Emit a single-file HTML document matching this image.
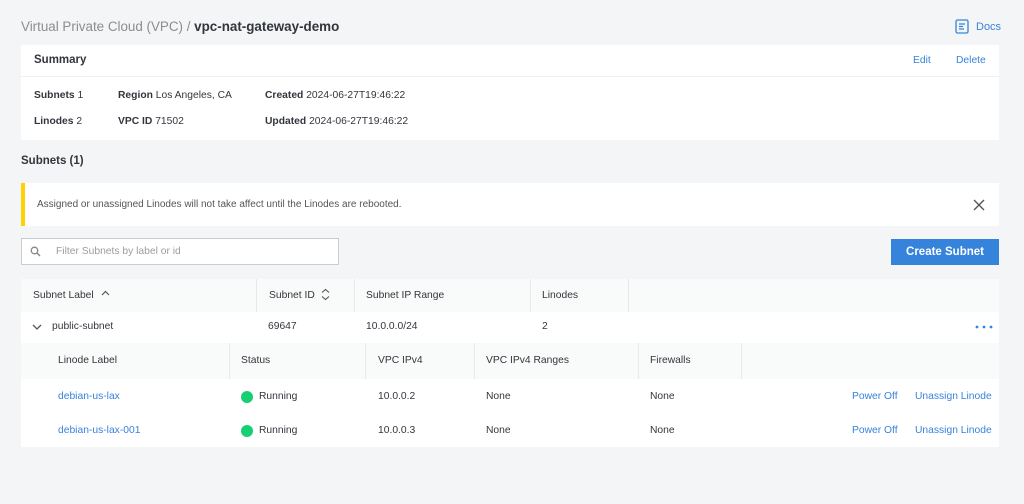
<!DOCTYPE html>
<html><head><meta charset="utf-8"><style>
*{margin:0;padding:0;box-sizing:border-box}
body{width:1024px;height:504px;background:#f4f5f6;font-family:"Liberation Sans",sans-serif;font-size:10.3px;color:#32363c;position:relative;overflow:hidden}
.a{position:absolute;white-space:nowrap}
.b{font-weight:bold}
.blue{color:#3683dc}
.g{color:#555}
.vd{position:absolute;width:1px;background:#e8e9ea}
</style></head><body>
<div class="a" style="left:21px;top:19px;font-size:13.4px;color:#8a8d91">Virtual Private Cloud (VPC) / <span class="b" style="color:#32363c">vpc-nat-gateway-demo</span></div>
<svg class="a" style="left:955px;top:19px" width="14" height="15" viewBox="0 0 14 15"><rect x="1" y="1" width="12" height="13" rx="1.5" fill="none" stroke="#3683dc" stroke-width="1.3"/><path d="M4 5h6M4 7.5h4M4 10h5" stroke="#3683dc" stroke-width="1.2"/></svg>
<div class="a blue" style="left:976px;top:21px;font-size:11px">Docs</div>

<div class="a" style="left:21px;top:45px;width:978px;height:95px;background:#fff"></div>
<div class="a" style="left:21px;top:76px;width:978px;height:1px;background:#f0f1f2"></div>
<div class="a b" style="left:34px;top:54px;font-size:11.5px">Summary</div>
<div class="a blue" style="left:913px;top:55px">Edit</div>
<div class="a blue" style="left:956px;top:55px">Delete</div>
<div class="a" style="left:34px;top:90px"><span class="b">Subnets</span> 1</div>
<div class="a" style="left:34px;top:116px"><span class="b">Linodes</span> 2</div>
<div class="a" style="left:118px;top:90px"><span class="b">Region</span> Los Angeles, CA</div>
<div class="a" style="left:118px;top:116px"><span class="b">VPC ID</span> 71502</div>
<div class="a" style="left:265px;top:90px"><span class="b">Created</span> 2024-06-27T19:46:22</div>
<div class="a" style="left:265px;top:116px"><span class="b">Updated</span> 2024-06-27T19:46:22</div>

<div class="a b" style="left:21px;top:155px;font-size:11.5px">Subnets (1)</div>

<div class="a" style="left:21px;top:183px;width:978px;height:43px;background:#fff;border-left:4px solid #ffd002"></div>
<div class="a g" style="left:37px;top:199px;font-size:10px">Assigned or unassigned Linodes will not take affect until the Linodes are rebooted.</div>
<svg class="a" style="left:973px;top:199px" width="12" height="12"><path d="M1 1L11 11M11 1L1 11" stroke="#555" stroke-width="1.4"/></svg>

<div class="a" style="left:21px;top:238px;width:318px;height:27px;background:#fff;border:1px solid #ccc"></div>
<svg class="a" style="left:30px;top:246px" width="11" height="11"><circle cx="4.5" cy="4.5" r="3.3" fill="none" stroke="#888" stroke-width="1.3"/><path d="M7 7l3 3" stroke="#888" stroke-width="1.4"/></svg>
<div class="a" style="left:56px;top:246px;color:#9a9da1">Filter Subnets by label or id</div>
<div class="a b" style="left:891px;top:239px;width:108px;height:26px;background:#3683dc;color:#fff;font-size:11.5px;text-align:center;line-height:26px">Create Subnet</div>

<div class="a" style="left:21px;top:279px;width:978px;height:33px;background:#f9fafa"></div>
<div class="vd" style="left:256px;top:279px;height:33px"></div>
<div class="vd" style="left:354px;top:279px;height:33px"></div>
<div class="vd" style="left:530px;top:279px;height:33px"></div>
<div class="vd" style="left:628px;top:279px;height:33px"></div>
<div class="a" style="left:33px;top:290px">Subnet Label</div>
<svg class="a" style="left:101px;top:290px" width="9" height="6"><path d="M1 5l3.5-3.5L8 5" fill="none" stroke="#555" stroke-width="1.2"/></svg>
<div class="a" style="left:269px;top:290px">Subnet ID</div>
<svg class="a" style="left:321px;top:288px" width="9" height="13"><path d="M1 4.5l3.5-3L8 4.5M1 8.5l3.5 3 3.5-3" fill="none" stroke="#555" stroke-width="1.1"/></svg>
<div class="a" style="left:366px;top:290px">Subnet IP Range</div>
<div class="a" style="left:542px;top:290px">Linodes</div>

<div class="a" style="left:21px;top:312px;width:978px;height:31px;background:#fff"></div>
<svg class="a" style="left:32px;top:324px" width="10" height="6"><path d="M1 1l4 4 4-4" fill="none" stroke="#555" stroke-width="1.3"/></svg>
<div class="a" style="left:52px;top:321px">public-subnet</div>
<div class="a" style="left:268px;top:321px">69647</div>
<div class="a" style="left:366px;top:321px">10.0.0.0/24</div>
<div class="a" style="left:542px;top:321px">2</div>
<svg class="a" style="left:975px;top:325px" width="18" height="4"><circle cx="2" cy="2" r="1.4" fill="#3683dc"/><circle cx="9" cy="2" r="1.4" fill="#3683dc"/><circle cx="16" cy="2" r="1.4" fill="#3683dc"/></svg>

<div class="a" style="left:21px;top:343px;width:978px;height:36px;background:#f9fafa"></div>
<div class="vd" style="left:229px;top:343px;height:36px"></div>
<div class="vd" style="left:365px;top:343px;height:36px"></div>
<div class="vd" style="left:474px;top:343px;height:36px"></div>
<div class="vd" style="left:638px;top:343px;height:36px"></div>
<div class="vd" style="left:741px;top:343px;height:36px"></div>
<div class="a" style="left:58px;top:355px">Linode Label</div>
<div class="a" style="left:241px;top:355px">Status</div>
<div class="a" style="left:378px;top:355px">VPC IPv4</div>
<div class="a" style="left:486px;top:355px">VPC IPv4 Ranges</div>
<div class="a" style="left:650px;top:355px">Firewalls</div>

<div class="a" style="left:21px;top:379px;width:978px;height:68px;background:#fff"></div>
<div class="a blue" style="left:58px;top:391px">debian-us-lax</div>
<div class="a" style="left:241px;top:391px;width:12px;height:12px;border-radius:50%;background:#17cf73"></div>
<div class="a" style="left:259px;top:391px">Running</div>
<div class="a" style="left:378px;top:391px">10.0.0.2</div>
<div class="a" style="left:486px;top:391px">None</div>
<div class="a" style="left:650px;top:391px">None</div>
<div class="a blue" style="left:852px;top:391px">Power Off</div>
<div class="a blue" style="left:915px;top:391px">Unassign Linode</div>

<div class="a blue" style="left:58px;top:425px">debian-us-lax-001</div>
<div class="a" style="left:241px;top:425px;width:12px;height:12px;border-radius:50%;background:#17cf73"></div>
<div class="a" style="left:259px;top:425px">Running</div>
<div class="a" style="left:378px;top:425px">10.0.0.3</div>
<div class="a" style="left:486px;top:425px">None</div>
<div class="a" style="left:650px;top:425px">None</div>
<div class="a blue" style="left:852px;top:425px">Power Off</div>
<div class="a blue" style="left:915px;top:425px">Unassign Linode</div>
</body></html>
